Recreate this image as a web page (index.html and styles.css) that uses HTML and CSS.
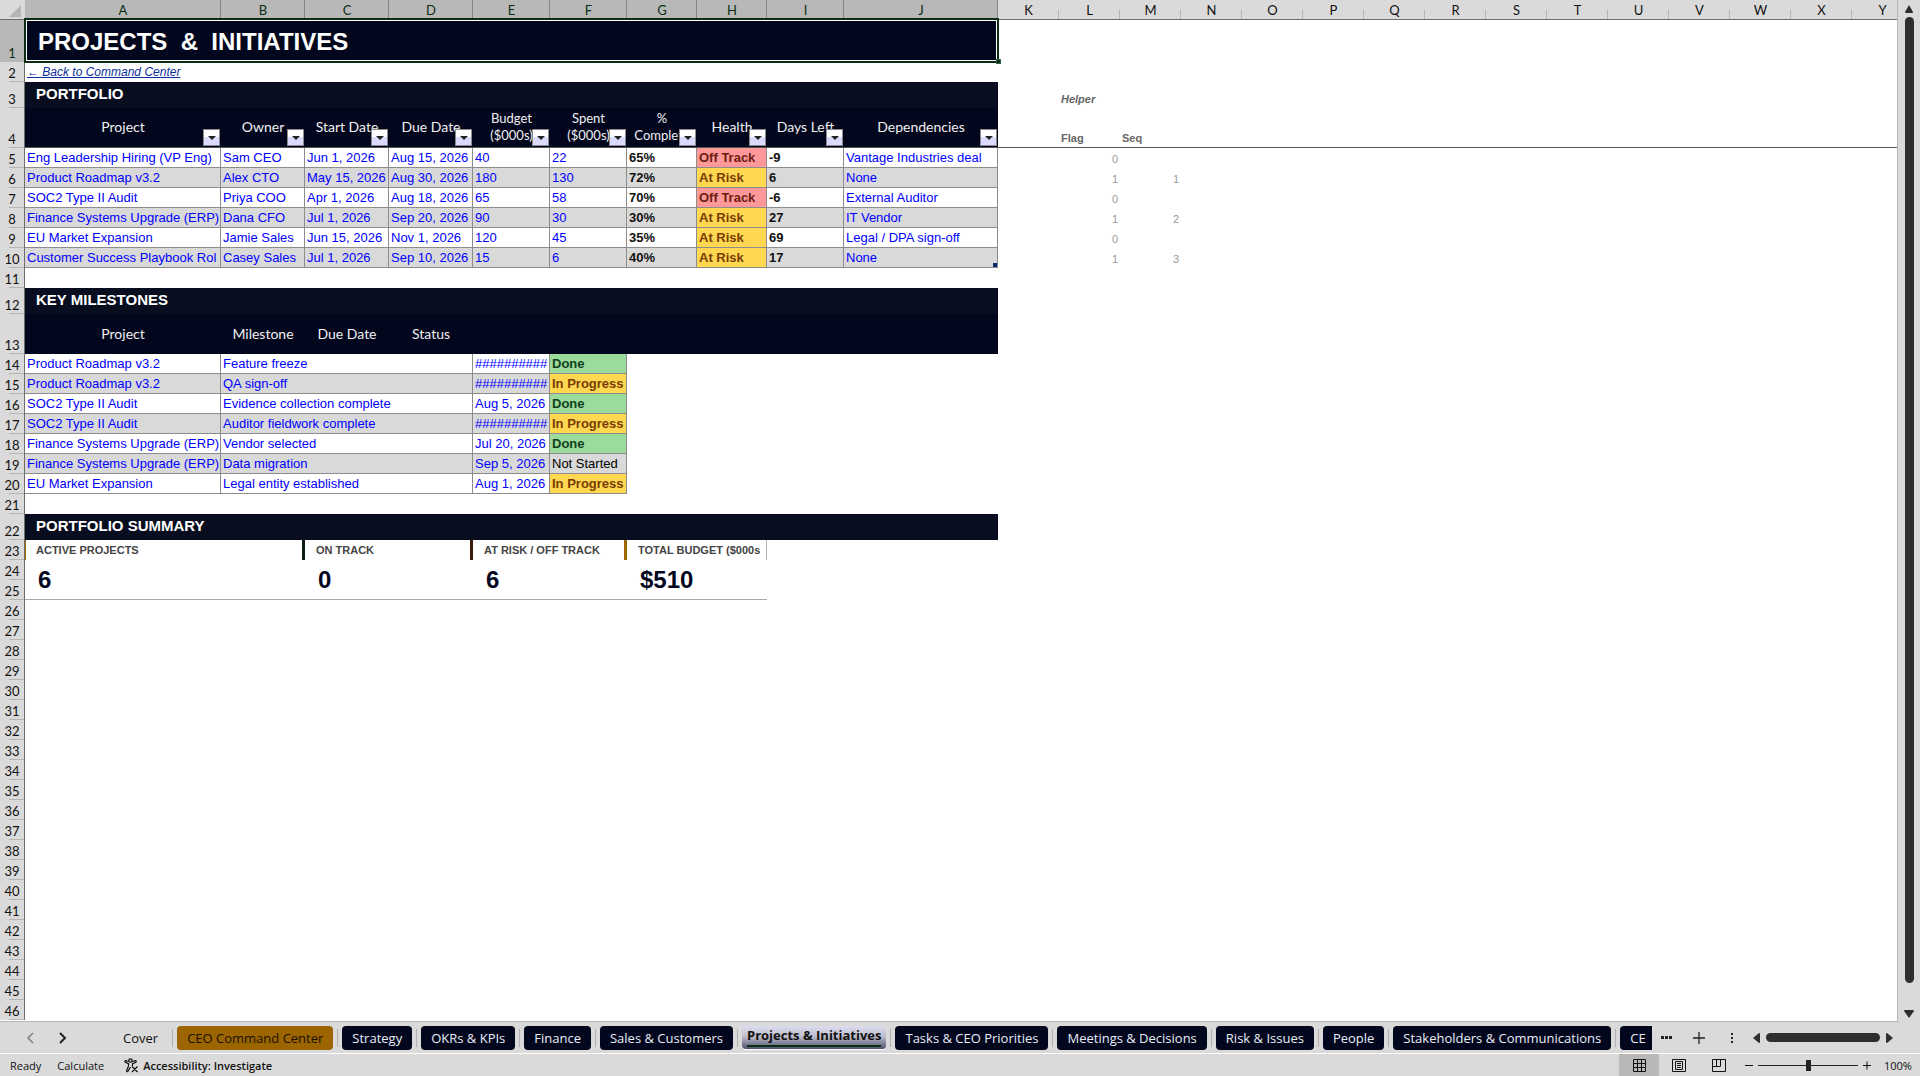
FILE: index.html
```html
<!DOCTYPE html>
<html lang="en">
<head>
    <meta charset="UTF-8">
    <meta name="viewport" content="width=device-width, initial-scale=1.0">
    <title>Projects &amp; Initiatives</title>
    <link rel="stylesheet" href="styles.css">
</head>
<body>
    <main class="workbook">
        <div class="sheet">
            <table class="grid">
                <colgroup>
                    <col class="w-head"><col class="w-a"><col class="w-b"><col class="w-b"><col class="w-b">
                    <col class="w-e"><col class="w-e"><col class="w-g"><col class="w-g"><col class="w-e"><col class="w-j">
                    <col class="w-std"><col class="w-std"><col class="w-std"><col class="w-std"><col class="w-std"><col class="w-std"><col class="w-std">
                    <col class="w-std"><col class="w-std"><col class="w-std"><col class="w-std"><col class="w-std"><col class="w-std"><col class="w-std"><col>
                </colgroup>
                <thead>
                    <tr class="letters">
                        <th class="corner"><svg width="12" height="12" viewBox="0 0 12 12"><path d="M12 0v12H0z" fill="#b5b5b5"/></svg></th>
                        <th class="on">A</th><th class="on">B</th><th class="on">C</th><th class="on">D</th><th class="on">E</th><th class="on">F</th><th class="on">G</th><th class="on">H</th><th class="on">I</th><th class="on">J</th>
                        <th>K</th><th>L</th><th>M</th><th>N</th><th>O</th><th>P</th><th>Q</th><th>R</th><th>S</th><th>T</th><th>U</th><th>V</th><th>W</th><th>X</th><th class="last">Y</th>
                    </tr>
                </thead>
                <tbody>
                    <tr class="row-title"><th class="on">1</th><td colspan="10" class="title">PROJECTS&nbsp; &amp;&nbsp; INITIATIVES<span class="handle"></span></td><td colspan="15"></td></tr>
                    <tr><th>2</th><td colspan="10"><a class="back" href="#">← Back to Command Center</a></td><td colspan="15"></td></tr>
                    <tr class="row-section"><th>3</th><td colspan="10" class="section">PORTFOLIO</td><td></td><td class="helper"><i>Helper</i></td><td colspan="13"></td></tr>
                    <tr class="row-heads frozen">
                        <th>4</th>
                        <td class="head">Project<button class="filter" aria-label="Filter Project"></button></td>
                        <td class="head">Owner<button class="filter" aria-label="Filter Owner"></button></td>
                        <td class="head">Start Date<button class="filter" aria-label="Filter Start Date"></button></td>
                        <td class="head">Due Date<button class="filter" aria-label="Filter Due Date"></button></td>
                        <td class="head wrap">Budget<br>($000s)<button class="filter" aria-label="Filter Budget"></button></td>
                        <td class="head wrap">Spent<br>($000s)<button class="filter" aria-label="Filter Spent"></button></td>
                        <td class="head wrap">%<br>Complete<button class="filter" aria-label="Filter Complete"></button></td>
                        <td class="head">Health<button class="filter" aria-label="Filter Health"></button></td>
                        <td class="head">Days Left<button class="filter" aria-label="Filter Days Left"></button></td>
                        <td class="head">Dependencies<button class="filter" aria-label="Filter Dependencies"></button></td>
                        <td></td><td class="helper">Flag</td><td class="helper">Seq</td><td colspan="12"></td>
                    </tr>
                    <tr class="data"><th>5</th><td>Eng Leadership Hiring (VP Eng)</td><td>Sam CEO</td><td>Jun 1, 2026</td><td>Aug 15, 2026</td><td>40</td><td>22</td><td class="calc">65%</td><td class="off">Off Track</td><td class="calc">-9</td><td>Vantage Industries deal</td><td class="x"></td><td class="x num">0</td><td class="x"></td><td class="x" colspan="12"></td></tr>
                    <tr class="data band"><th>6</th><td>Product Roadmap v3.2</td><td>Alex CTO</td><td>May 15, 2026</td><td>Aug 30, 2026</td><td>180</td><td>130</td><td class="calc">72%</td><td class="risk">At Risk</td><td class="calc">6</td><td>None</td><td class="x"></td><td class="x num">1</td><td class="x num">1</td><td class="x" colspan="12"></td></tr>
                    <tr class="data"><th>7</th><td>SOC2 Type II Audit</td><td>Priya COO</td><td>Apr 1, 2026</td><td>Aug 18, 2026</td><td>65</td><td>58</td><td class="calc">70%</td><td class="off">Off Track</td><td class="calc">-6</td><td>External Auditor</td><td class="x"></td><td class="x num">0</td><td class="x"></td><td class="x" colspan="12"></td></tr>
                    <tr class="data band"><th>8</th><td>Finance Systems Upgrade (ERP)</td><td>Dana CFO</td><td>Jul 1, 2026</td><td>Sep 20, 2026</td><td>90</td><td>30</td><td class="calc">30%</td><td class="risk">At Risk</td><td class="calc">27</td><td>IT Vendor</td><td class="x"></td><td class="x num">1</td><td class="x num">2</td><td class="x" colspan="12"></td></tr>
                    <tr class="data"><th>9</th><td>EU Market Expansion</td><td>Jamie Sales</td><td>Jun 15, 2026</td><td>Nov 1, 2026</td><td>120</td><td>45</td><td class="calc">35%</td><td class="risk">At Risk</td><td class="calc">69</td><td>Legal / DPA sign-off</td><td class="x"></td><td class="x num">0</td><td class="x"></td><td class="x" colspan="12"></td></tr>
                    <tr class="data band"><th>10</th><td>Customer Success Playbook Rol</td><td>Casey Sales</td><td>Jul 1, 2026</td><td>Sep 10, 2026</td><td>15</td><td>6</td><td class="calc">40%</td><td class="risk">At Risk</td><td class="calc">17</td><td class="table-end">None</td><td class="x"></td><td class="x num">1</td><td class="x num">3</td><td class="x" colspan="12"></td></tr>
                    <tr><th>11</th><td colspan="25"></td></tr>
                    <tr class="row-section"><th>12</th><td colspan="10" class="section">KEY MILESTONES</td><td colspan="15"></td></tr>
                    <tr class="row-heads"><th>13</th><td class="head">Project</td><td class="head">Milestone</td><td class="head">Due Date</td><td class="head">Status</td><td class="head" colspan="6"></td><td colspan="15"></td></tr>
                    <tr class="data"><th>14</th><td>Product Roadmap v3.2</td><td colspan="3">Feature freeze</td><td>##########</td><td class="done">Done</td><td class="x" colspan="19"></td></tr>
                    <tr class="data band"><th>15</th><td>Product Roadmap v3.2</td><td colspan="3">QA sign-off</td><td>##########</td><td class="risk">In Progress</td><td class="x" colspan="19"></td></tr>
                    <tr class="data"><th>16</th><td>SOC2 Type II Audit</td><td colspan="3">Evidence collection complete</td><td>Aug 5, 2026</td><td class="done">Done</td><td class="x" colspan="19"></td></tr>
                    <tr class="data band"><th>17</th><td>SOC2 Type II Audit</td><td colspan="3">Auditor fieldwork complete</td><td>##########</td><td class="risk">In Progress</td><td class="x" colspan="19"></td></tr>
                    <tr class="data"><th>18</th><td>Finance Systems Upgrade (ERP)</td><td colspan="3">Vendor selected</td><td>Jul 20, 2026</td><td class="done">Done</td><td class="x" colspan="19"></td></tr>
                    <tr class="data band"><th>19</th><td>Finance Systems Upgrade (ERP)</td><td colspan="3">Data migration</td><td>Sep 5, 2026</td><td class="todo">Not Started</td><td class="x" colspan="19"></td></tr>
                    <tr class="data"><th>20</th><td>EU Market Expansion</td><td colspan="3">Legal entity established</td><td>Aug 1, 2026</td><td class="risk">In Progress</td><td class="x" colspan="19"></td></tr>
                    <tr><th>21</th><td colspan="25"></td></tr>
                    <tr class="row-section"><th>22</th><td colspan="10" class="section">PORTFOLIO SUMMARY</td><td colspan="15"></td></tr>
                    <tr><th>23</th><td colspan="2" class="label first">ACTIVE PROJECTS</td><td colspan="2" class="label brown">ON TRACK</td><td colspan="2" class="label gold">AT RISK / OFF TRACK</td><td colspan="2" class="label end">TOTAL BUDGET ($000s</td><td colspan="17"></td></tr>
                    <tr><th>24</th><td colspan="2" rowspan="2" class="value">6</td><td colspan="2" rowspan="2" class="value">0</td><td colspan="2" rowspan="2" class="value">6</td><td colspan="2" rowspan="2" class="value">$510</td><td colspan="17"></td></tr>
                    <tr><th>25</th><td colspan="17"></td></tr>
                    <tr><th>26</th><td colspan="25"></td></tr>
                    <tr><th>27</th><td colspan="25"></td></tr>
                    <tr><th>28</th><td colspan="25"></td></tr>
                    <tr><th>29</th><td colspan="25"></td></tr>
                    <tr><th>30</th><td colspan="25"></td></tr>
                    <tr><th>31</th><td colspan="25"></td></tr>
                    <tr><th>32</th><td colspan="25"></td></tr>
                    <tr><th>33</th><td colspan="25"></td></tr>
                    <tr><th>34</th><td colspan="25"></td></tr>
                    <tr><th>35</th><td colspan="25"></td></tr>
                    <tr><th>36</th><td colspan="25"></td></tr>
                    <tr><th>37</th><td colspan="25"></td></tr>
                    <tr><th>38</th><td colspan="25"></td></tr>
                    <tr><th>39</th><td colspan="25"></td></tr>
                    <tr><th>40</th><td colspan="25"></td></tr>
                    <tr><th>41</th><td colspan="25"></td></tr>
                    <tr><th>42</th><td colspan="25"></td></tr>
                    <tr><th>43</th><td colspan="25"></td></tr>
                    <tr><th>44</th><td colspan="25"></td></tr>
                    <tr><th>45</th><td colspan="25"></td></tr>
                    <tr><th>46</th><td colspan="25"></td></tr>
                </tbody>
            </table>
        </div>
        <div class="vscroll">
            <svg width="10" height="8" viewBox="0 0 10 8"><path d="M5 0l4 7q0 1-1 1H2Q1 8 1 7z" fill="#2e2e2e"/></svg>
            <div class="vthumb"></div>
            <svg width="10" height="8" viewBox="0 0 10 8"><path d="M5 8L0 1q0-1 1-1h8q1 0 1 1z" fill="#2e2e2e"/></svg>
        </div>
    </main>

    <nav class="tabbar">
        <div class="arrows">
            <button aria-label="Previous sheet"><svg width="8" height="12" viewBox="0 0 8 12"><path d="M6 1L1 6l5 5" fill="none" stroke="#777" stroke-width="1.3"/></svg></button>
            <button aria-label="Next sheet"><svg width="8" height="12" viewBox="0 0 8 12"><path d="M1 1l5 5-5 5" fill="none" stroke="#222" stroke-width="2"/></svg></button>
        </div>
        <div class="tabs">
            <button class="tab plain">Cover</button>
            <button class="tab gold-tab">CEO Command Center</button>
            <button class="tab">Strategy</button>
            <button class="tab">OKRs &amp; KPIs</button>
            <button class="tab">Finance</button>
            <button class="tab">Sales &amp; Customers</button>
            <button class="tab active"><span>Projects &amp; Initiatives</span></button>
            <button class="tab">Tasks &amp; CEO Priorities</button>
            <button class="tab">Meetings &amp; Decisions</button>
            <button class="tab">Risk &amp; Issues</button>
            <button class="tab">People</button>
            <button class="tab">Stakeholders &amp; Communications</button>
            <button class="tab cut">CE</button>
        </div>
        <div class="tab-tools">
            <button aria-label="More sheets"><svg width="12" height="4" viewBox="0 0 12 4"><path d="M0 0h3v3H0zM4 0h3v3H4zM8 0h3v3H8z" fill="#222"/></svg></button>
            <button aria-label="New sheet"><svg width="12" height="12" viewBox="0 0 12 12"><path d="M6 0v12M0 6h12" stroke="#222" stroke-width="1.3"/></svg></button>
            <button class="grip" aria-label="Resize tabs"><svg width="3" height="12" viewBox="0 0 3 12"><path d="M0 1h2v2H0zM0 5h2v2H0zM0 9h2v2H0z" fill="#222"/></svg></button>
        </div>
        <div class="hscroll">
            <svg width="7" height="10" viewBox="0 0 7 10"><path d="M0 5l6-5q1 0 1 1v8q0 1-1 1z" fill="#2e2e2e"/></svg>
            <div class="hthumb"></div>
            <svg width="7" height="10" viewBox="0 0 7 10"><path d="M7 5L1 0Q0 0 0 1v8q0 1 1 1z" fill="#2e2e2e"/></svg>
        </div>
    </nav>

    <footer class="status">
        <span>Ready</span>
        <span class="calculate">Calculate</span>
        <button class="access">
            <svg width="15" height="15" viewBox="0 0 15 15" fill="none" stroke="#111" stroke-width="1.2"><circle cx="6.500" cy="2.500" r="1.700"/><path d="M4.800 3.500L1.500 2.600Q.3 3 1.200 4.200L4.500 5.700V8L2.600 12.500q0 1.500 1.300.9L6.500 9M8.200 3.500l3.400-.9q1.200.4.300 1.600L8.500 5.700V8M8 8.500l5.500 5.500M13.500 8.500L8 14"/></svg>
            Accessibility: Investigate
        </button>
        <div class="views">
            <button class="view current" aria-label="Normal"><svg width="13" height="13" viewBox="0 0 13 13"><path d="M.5.500h12v12H.500zM4.500.500v12M8.500.500v12M.5 4.500h12M.5 8.500h12" fill="none" stroke="#111"/></svg></button>
            <button class="view" aria-label="Page Layout"><svg width="14" height="13" viewBox="0 0 14 13"><path d="M.5.500h13v12H.500zM3.500 2.500h7v8h-7zM5 4.500h4M5 6.500h4M5 8.500h4" fill="none" stroke="#111"/></svg></button>
            <button class="view" aria-label="Page Break Preview"><svg width="14" height="13" viewBox="0 0 14 13"><path d="M.5.500h13v12H.500zM.5 7.500h8M4.500.500v7M8.500.500v7" fill="none" stroke="#111"/></svg></button>
        </div>
        <div class="zoom">
            <button aria-label="Zoom out"><svg width="8" height="9" viewBox="0 0 8 9"><path d="M0 4.500h8" stroke="#111"/></svg></button>
            <input type="range" min="0" max="200" value="100" aria-label="Zoom">
            <button aria-label="Zoom in"><svg width="8" height="9" viewBox="0 0 8 9"><path d="M0 4.500h8M4 .5v8" stroke="#111"/></svg></button>
            <span class="percent">100%</span>
        </div>
    </footer>
</body>
</html>
```
FILE: styles.css
```css
* {
    box-sizing: border-box;
}
body {
    margin: 0;
    height: 100vh;
    display: flex;
    flex-direction: column;
    background: #dadada;
    font-family: "Liberation Sans", Arial, sans-serif;
    font-size: 13px;
    overflow: hidden;
}
button {
    border: 0;
    padding: 0;
    background: none;
    font: inherit;
    color: inherit;
    display: flex;
    align-items: center;
}
svg {
    display: block;
}

/* sheet */
.workbook {
    flex: 1;
    min-height: 0;
    display: flex;
}
.sheet {
    flex: 1;
    min-width: 0;
    overflow: hidden;
    background: #fff;
    border-right: 1px solid #b5b5b5;
    border-bottom: 1px solid #b5b5b5;
}
.grid {
    width: 100%;
    table-layout: fixed;
    border-collapse: separate;
    border-spacing: 0;
}
.w-head { width: 25px; }
.w-a { width: 196px; }
.w-b { width: 84px; }
.w-e { width: 77px; }
.w-g { width: 70px; }
.w-j { width: 154px; }
.w-std { width: 61px; }

.grid th,
.grid td {
    height: 20px;
    padding: 0 2px;
    line-height: 19px;
    white-space: nowrap;
    overflow: hidden;
}
.grid th {
    padding: 0;
    font-family: Lato, Calibri, sans-serif;
    font-size: 13px;
    font-weight: normal;
    text-align: center;
    vertical-align: bottom;
    line-height: 18px;
    color: #111;
    background: linear-gradient(#b5b5b5, #b5b5b5) right bottom / 15px 1px no-repeat #dadada;
    border-right: 1px solid #6e6e6e;
}
.grid .letters th {
    padding-top: 2px;
    line-height: 17px;
    border-right: 0;
    border-bottom: 1px solid #6e6e6e;
    background: linear-gradient(#b5b5b5, #b5b5b5) right bottom / 1px 9px no-repeat #dadada;
}
.grid .letters th.on {
    color: #0b2e13;
    background: linear-gradient(#858585, #858585) right bottom / 1px 19px no-repeat #b8b8b8;
}
.grid .letters .last {
    padding-left: 16px;
    background: #dadada;
}
.grid .letters .corner {
    padding: 5px 0 2px 9px;
    background: #dadada;
}
.grid tbody th.on {
    color: #0b2e13;
    background-color: #b8b8b8;
}
.grid .row-title td { height: 42px; }
.grid .row-section td { height: 26px; }
.grid .row-heads td { height: 40px; }

.grid .title {
    position: relative;
    overflow: visible;
    padding-left: 13px;
    font-size: 24px;
    font-weight: bold;
    color: #fff;
    background: #03071e;
}
/* selection frame round the merged title cell */
.title::before {
    content: "";
    position: absolute;
    inset: -2px -1px -1px -1px;
    border: 2px solid #0b2e13;
    box-shadow: inset 0 0 0 1px #fff;
}
.handle {
    position: absolute;
    right: -3px;
    bottom: -2px;
    width: 5px;
    height: 5px;
    background: #0b2e13;
    border: 1px solid #2f5f52;
}
.back {
    font-size: 12px;
    font-style: italic;
    color: #0a2f9c;
}
.grid .section {
    padding: 0 0 3px 11px;
    font-size: 15px;
    font-weight: bold;
    color: #fff;
    background: #080e1f;
}
.grid .head {
    position: relative;
    padding: 0 0 2px;
    line-height: 17px;
    font-family: Lato, Calibri, sans-serif;
    font-size: 14px;
    text-align: center;
    color: #f0f0f0;
    background: #03071e;
}
.grid .head.wrap {
    font-size: 13px;
}
.frozen td {
    border-bottom: 1px solid #555;
}
.filter {
    position: absolute;
    right: 1px;
    bottom: 1px;
    width: 17px;
    height: 17px;
    justify-content: center;
    border: 1px solid #8a8a8a;
    background: linear-gradient(#fff 50%, #dadaff 50%);
}
.filter::after {
    content: "";
    border: 4px solid transparent;
    border-top-color: #222;
    border-bottom: 0;
}

.data td {
    color: #0000ff;
    border-right: 1px solid #8c8c8c;
    border-bottom: 1px solid #8c8c8c;
}
.data.band td {
    background: #d9d9d9;
}
.data td.todo { color: #000; }
.data td.calc {
    font-weight: bold;
    color: #111;
}
.data td.off,
.data td.risk,
.data td.done {
    font-weight: bold;
}
.data td.off {
    color: #6b1d10;
    background: #ff9999;
}
.data td.risk {
    color: #783c04;
    background: #ffd750;
}
.data td.done {
    color: #123f1c;
    background: #9bdb9b;
}
.data td.x {
    border: 0;
    background: #fff;
}
.data td.table-end {
    background: linear-gradient(#0a2a6b, #0a2a6b) right bottom / 4px 4px no-repeat #d9d9d9;
}
.helper {
    font-size: 11px;
    font-weight: bold;
    color: #666;
}
.grid .row-section .helper,
.grid .frozen .helper {
    vertical-align: bottom;
    line-height: 17px;
}
.grid td.num {
    padding-top: 2px;
    line-height: 18px;
    font-size: 11px;
    text-align: right;
    color: #999;
}

.grid .label {
    padding-left: 11px;
    font-size: 11px;
    font-weight: bold;
    color: #444;
    border-right: 3px solid #0b1f10;
}
.grid .label.first {
    padding-left: 10px;
    border-left: 1px solid #9c6500;
}
.grid .label.brown { border-right-color: #3b1a08; }
.grid .label.gold { border-right-color: #9c6500; }
.grid .label.end { border-right: 1px solid #b5b5b5; }
.grid .value {
    padding-left: 13px;
    font-size: 24px;
    font-weight: bold;
    color: #03071e;
    border-bottom: 1px solid #a8a8a8;
}

/* scroll bars */
.vscroll {
    width: 22px;
    padding: 5px 0 4px;
    display: flex;
    flex-direction: column;
    align-items: center;
    gap: 4px;
}
.vthumb {
    width: 9px;
    flex: 1;
    margin-bottom: 23px;
    border-radius: 5px;
    background: #2e2e2e;
}
.hscroll {
    display: flex;
    align-items: center;
    gap: 6px;
    width: 167px;
    padding-right: 27px;
}
.hthumb {
    flex: 1;
    height: 9px;
    border-radius: 5px;
    background: #2e2e2e;
}

/* sheet tabs */
.tabbar {
    height: 32px;
    display: flex;
    font-family: "Open Sans", "Segoe UI", sans-serif;
    font-size: 13px;
    border-bottom: 1px solid #fff;
}
.arrows {
    display: flex;
    gap: 24px;
    width: 113px;
    padding-left: 27px;
}
.tabs {
    flex: 1;
    min-width: 0;
    display: flex;
    align-items: flex-start;
    gap: 9px;
    padding-top: 4px;
    overflow: hidden;
}
.tab {
    position: relative;
    flex: none;
    height: 24px;
    padding: 0 10px;
    border-radius: 4px;
    color: #e8eef5;
    background: #03071e;
}
.tab + .tab::before {
    content: "";
    position: absolute;
    left: -5px;
    top: 3px;
    height: 18px;
    border-left: 1px solid #b0b0b0;
}
.tab.plain {
    color: #111;
    background: none;
}
.tab.gold-tab {
    color: #1a0f00;
    background: #9c6500;
}
/* last tab runs on under the tools */
.tab.cut {
    flex: 1;
    padding-right: 0;
    border-radius: 4px 0 0 4px;
}
.tab.active {
    align-items: flex-start;
    padding: 0 5px;
    font-weight: bold;
    color: #111;
    background: linear-gradient(#dcdcf0, #bfbfcc 45%, #77778f 80%, #4a5270);
    border-bottom: 1px solid #fff;
}
.tab.active span {
    height: 21px;
    line-height: 19px;
    border-bottom: 2px solid #0b2e13;
}
.tab-tools {
    display: flex;
    gap: 20px;
    width: 101px;
    padding-left: 9px;
}
.grip {
    margin-left: 6px;
}

/* status bar */
.status {
    height: 22px;
    display: flex;
    align-items: center;
    font-family: "Open Sans", "Segoe UI", sans-serif;
    font-size: 11px;
    color: #111;
    padding-left: 10px;
}
.calculate {
    margin-left: 16px;
}
.access {
    gap: 4px;
    margin-left: 20px;
    font-weight: 600;
}
.views {
    display: flex;
    height: 100%;
    margin-left: auto;
}
.view {
    width: 40px;
    justify-content: center;
}
.view.current {
    background: #b8b8b8;
}
.zoom {
    display: flex;
    align-items: center;
    gap: 5px;
    width: 181px;
    padding-left: 6px;
}
.zoom input {
    appearance: none;
    width: 100px;
    height: 11px;
    margin: 0;
    background: linear-gradient(#222, #222) center / 100% 1px no-repeat;
}
.zoom input::-webkit-slider-thumb {
    appearance: none;
    width: 5px;
    height: 11px;
    background: #222;
}
.percent {
    margin-left: 8px;
}
```
